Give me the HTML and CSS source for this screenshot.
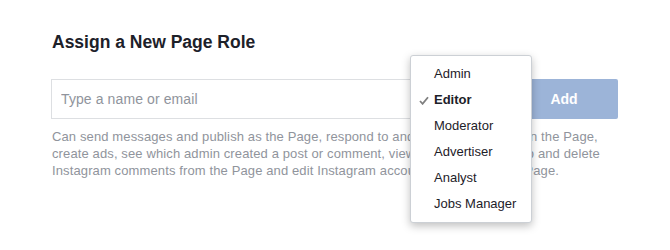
FILE: index.html
```html
<!DOCTYPE html>
<html lang="en">
<head>
    <meta charset="UTF-8">
    <title>Assign a New Page Role</title>
    <link rel="stylesheet" href="styles.css">
</head>
<body>
    <div class="role-panel">
        <h2>Assign a New Page Role</h2>
        <div class="role-row">
            <input type="text" class="role-input" placeholder="Type a name or email">
            <div class="role-picker">
                <button class="add-button" disabled>Add</button>
                <ul class="role-menu">
                    <li>Admin</li>
                    <li class="selected">
                        <svg class="check" width="10" height="9" viewBox="0 0 10 9"><path d="M1 5l2.6 2.8L9 1.2" fill="none" stroke="#7f7f7f" stroke-width="1.8"/></svg>
                        Editor
                    </li>
                    <li>Moderator</li>
                    <li>Advertiser</li>
                    <li>Analyst</li>
                    <li>Jobs Manager</li>
                </ul>
            </div>
        </div>
        <p class="role-desc">Can send messages and publish as the Page, respond to and delete comments on the Page, create ads, see which admin created a post or comment, view insights, respond to and delete Instagram comments from the Page and edit Instagram account details from the Page.</p>
    </div>
</body>
</html>
```

FILE: styles.css
```css
* {
    margin: 0;
    padding: 0;
    box-sizing: border-box;
}

html, body {
    min-height: 100%;
    height: 100%;
}

body {
    font-family: "Liberation Sans", Arial, sans-serif;
    background: #fff;
    color: #1d2129;
}

.role-panel {
    padding: 31px 52px 0 51px;
    min-height: 250px;
}

.role-panel h2 {
    font-size: 17.5px;
    font-weight: bold;
    line-height: 22px;
    margin-left: 1px;
    margin-bottom: 26px;
}

.role-row {
    display: flex;
    gap: 8px;
}

.role-input {
    flex: 1;
    height: 40px;
    border: 1px solid #dddfe2;
    padding: 0 9px;
    font-family: inherit;
    font-size: 14px;
    letter-spacing: 0.1px;
    color: #1d2129;
    outline: none;
}

.role-input::placeholder {
    color: #90949c;
}

.role-picker {
    position: relative;
}

.add-button {
    width: 108px;
    height: 40px;
    background: #9cb4d8;
    border: none;
    border-radius: 2px;
    color: #fff;
    font-family: inherit;
    font-size: 14px;
    font-weight: bold;
}

.role-menu {
    position: absolute;
    top: -24px;
    left: -100px;
    width: 122px;
    list-style: none;
    background: #fff;
    border: 1px solid #ccd0d5;
    border-radius: 3px;
    box-shadow: 0 3px 8px rgba(0, 0, 0, 0.25);
    padding: 5px 0 5px;
    z-index: 2;
}

.role-menu li {
    position: relative;
    font-size: 13px;
    line-height: 26px;
    padding-left: 23px;
    color: #1d2129;
}

.role-menu li.selected {
    font-weight: bold;
}

.role-menu .check {
    position: absolute;
    left: 8px;
    top: 9px;
}

.role-desc {
    margin-top: 9px;
    margin-left: 1px;
    font-size: 13px;
    letter-spacing: 0.12px;
    line-height: 17px;
    color: #90949c;
}
```
